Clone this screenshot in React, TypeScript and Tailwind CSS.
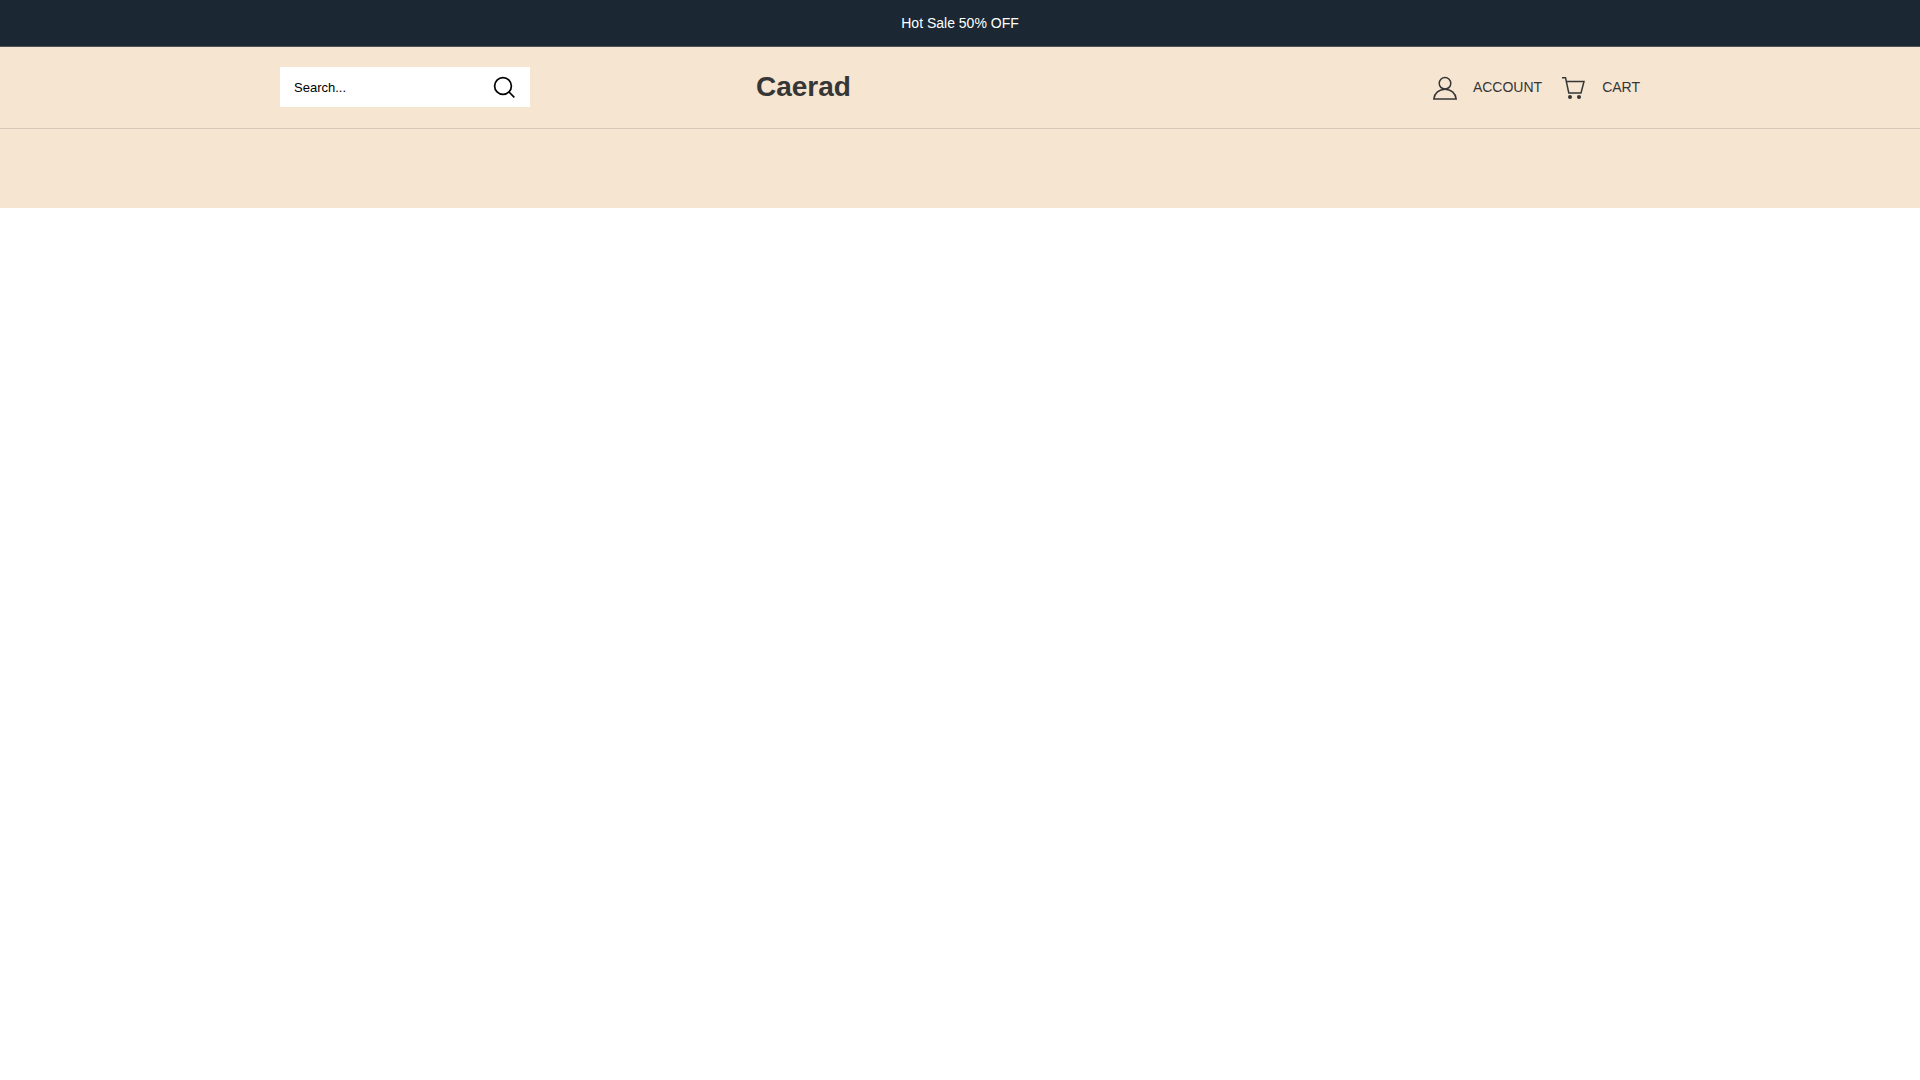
import React from 'react';

function SearchIcon() {
  return (
    <svg className="h-[26px] w-6" viewBox="0 0 24 26" fill="none" stroke="currentColor" strokeWidth="1.7" aria-hidden="true">
      <circle cx="11" cy="12" r="8.4" />
      <path d="M17 18L22.3 23.300" />
    </svg>
  );
}

function AccountIcon() {
  return (
    <svg className="h-[26px] w-6" viewBox="0 0 24 26" fill="none" stroke="currentColor" strokeWidth="1.5" aria-hidden="true">
      <circle cx="12" cy="9.300" r="5.800" />
      <path d="M.8 25C1.500 19.200 6 15.200 12 15.200s10.500 4 11.200 9.800z" />
    </svg>
  );
}

function CartIcon() {
  return (
    <svg className="h-[26px] w-6" viewBox="0 0 24 26" fill="none" stroke="currentColor" strokeWidth="1.5" aria-hidden="true">
      <path d="M0 3.700h3.500L6.800 19h12.200L22 7.500H4.300" />
      <circle cx="8" cy="23" r="2" fill="currentColor" stroke="none" />
      <circle cx="17" cy="23" r="2" fill="currentColor" stroke="none" />
    </svg>
  );
}

function AnnouncementBar() {
  return (
    <div className="border-b border-[#4c5459] bg-[#1b2834] py-3 text-center text-sm leading-[22px] text-white">
      <p>Hot Sale 50% OFF</p>
    </div>
  );
}

function Header() {
  return (
    <header className="border-b border-[#d5c8b8] bg-[#f5e5d1] pt-5 pb-[21px]">
      <div className="mx-auto flex max-w-[1360px] items-center">
        {/* Search */}
        <div className="w-[35%]">
          <form role="search" className="flex h-10 w-[250px] items-center bg-white pr-3.5">
            <input
              type="search"
              aria-label="Search"
              placeholder="Search..."
              className="h-10 min-w-0 flex-1 bg-transparent pl-3.5 text-[13px] text-black outline-none placeholder:text-black"
            />
            <button type="button" aria-label="Submit search" className="cursor-pointer text-black">
              <SearchIcon />
            </button>
          </form>
        </div>

        {/* Logo */}
        <a href="#" className="text-[28px] leading-10 font-bold text-[#363636]">
          Caerad
        </a>

        {/* Account and cart */}
        <nav className="ml-auto flex items-center gap-5 text-sm text-[#363636]">
          <a href="#account" className="flex items-center gap-4">
            <AccountIcon />
            <span>ACCOUNT</span>
          </a>
          <a href="#cart" className="flex items-center gap-4">
            <CartIcon />
            <span>CART</span>
          </a>
        </nav>
      </div>
    </header>
  );
}

export default function App() {
  return (
    <div className="min-h-screen bg-white font-['Liberation_Sans',Arial,sans-serif]">
      <AnnouncementBar />
      <Header />
      {/* Empty menu strip */}
      <div className="h-[79px] bg-[#f5e5d1]" />
    </div>
  );
}
